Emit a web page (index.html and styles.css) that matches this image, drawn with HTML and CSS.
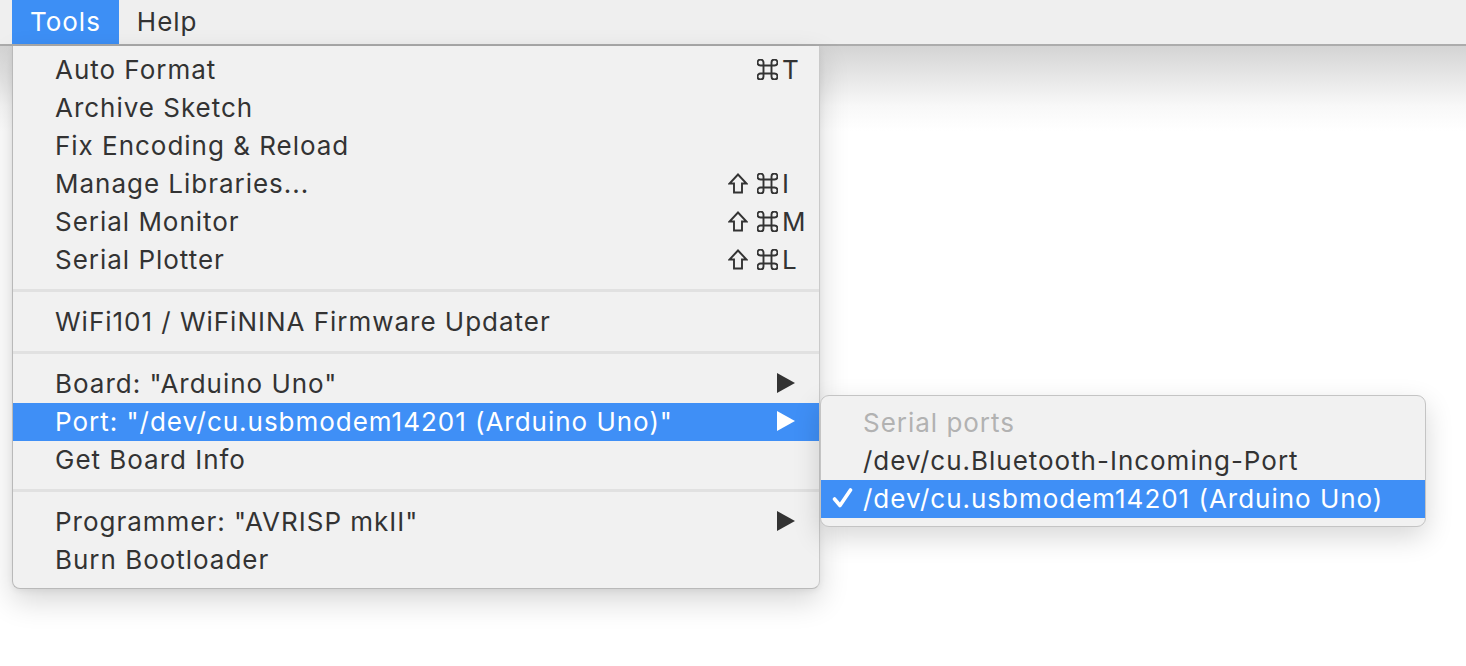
FILE: index.html
```html
<!DOCTYPE html>
<html>
<head>
<meta charset="utf-8">
<link rel="stylesheet" href="styles.css">
</head>
<body>
<div class="menubar">
  <div class="mb-item active">Tools</div>
  <div class="mb-item">Help</div>
</div>
<div class="desk"></div>

<div class="menu">
  <div class="item"><span class="label">Auto Format</span><span class="mods"><svg class="cmd" width="21" height="21" viewBox="-0.5 -0.5 21 21"><path d="M6 6 L6 3 A3 3 0 1 0 3 6 L17 6 A3 3 0 1 0 14 3 L14 17 A3 3 0 1 0 17 14 L3 14 A3 3 0 1 0 6 17 Z" fill="none" stroke="currentColor" stroke-width="1.9" stroke-linejoin="round"/></svg></span><span class="key">T</span></div>
  <div class="item"><span class="label">Archive Sketch</span><span class="mods"></span><span class="key"></span></div>
  <div class="item"><span class="label">Fix Encoding &amp; Reload</span><span class="mods"></span><span class="key"></span></div>
  <div class="item"><span class="label">Manage Libraries...</span><span class="mods"><svg class="shift" width="20" height="21" viewBox="0 0 20 21"><path d="M10 1.5 L18.5 10.5 L14 10.5 L14 19.5 L6 19.5 L6 10.5 L1.5 10.5 Z" fill="none" stroke="currentColor" stroke-width="1.9" stroke-linejoin="miter"/></svg><svg class="cmd" width="21" height="21" viewBox="-0.5 -0.5 21 21"><path d="M6 6 L6 3 A3 3 0 1 0 3 6 L17 6 A3 3 0 1 0 14 3 L14 17 A3 3 0 1 0 17 14 L3 14 A3 3 0 1 0 6 17 Z" fill="none" stroke="currentColor" stroke-width="1.9" stroke-linejoin="round"/></svg></span><span class="key">I</span></div>
  <div class="item"><span class="label">Serial Monitor</span><span class="mods"><svg class="shift" width="20" height="21" viewBox="0 0 20 21"><path d="M10 1.5 L18.5 10.5 L14 10.5 L14 19.5 L6 19.5 L6 10.5 L1.5 10.5 Z" fill="none" stroke="currentColor" stroke-width="1.9" stroke-linejoin="miter"/></svg><svg class="cmd" width="21" height="21" viewBox="-0.5 -0.5 21 21"><path d="M6 6 L6 3 A3 3 0 1 0 3 6 L17 6 A3 3 0 1 0 14 3 L14 17 A3 3 0 1 0 17 14 L3 14 A3 3 0 1 0 6 17 Z" fill="none" stroke="currentColor" stroke-width="1.9" stroke-linejoin="round"/></svg></span><span class="key">M</span></div>
  <div class="item"><span class="label">Serial Plotter</span><span class="mods"><svg class="shift" width="20" height="21" viewBox="0 0 20 21"><path d="M10 1.5 L18.5 10.5 L14 10.5 L14 19.5 L6 19.5 L6 10.5 L1.5 10.5 Z" fill="none" stroke="currentColor" stroke-width="1.9" stroke-linejoin="miter"/></svg><svg class="cmd" width="21" height="21" viewBox="-0.5 -0.5 21 21"><path d="M6 6 L6 3 A3 3 0 1 0 3 6 L17 6 A3 3 0 1 0 14 3 L14 17 A3 3 0 1 0 17 14 L3 14 A3 3 0 1 0 6 17 Z" fill="none" stroke="currentColor" stroke-width="1.9" stroke-linejoin="round"/></svg></span><span class="key">L</span></div>
  <div class="sep"></div>
  <div class="item"><span class="label">WiFi101 / WiFiNINA Firmware Updater</span><span class="mods"></span><span class="key"></span></div>
  <div class="sep"></div>
  <div class="item"><span class="label">Board: "Arduino Uno"</span><span class="mods"></span><span class="arrow"><svg width="18" height="20" viewBox="0 0 18 20"><path d="M0 0 L18 10 L0 20 Z" fill="currentColor"/></svg></span></div>
  <div class="item hl"><span class="label">Port: "/dev/cu.usbmodem14201 (Arduino Uno)"</span><span class="mods"></span><span class="arrow"><svg width="18" height="20" viewBox="0 0 18 20"><path d="M0 0 L18 10 L0 20 Z" fill="currentColor"/></svg></span></div>
  <div class="item"><span class="label">Get Board Info</span><span class="mods"></span><span class="key"></span></div>
  <div class="sep"></div>
  <div class="item"><span class="label">Programmer: "AVRISP mkII"</span><span class="mods"></span><span class="arrow"><svg width="18" height="20" viewBox="0 0 18 20"><path d="M0 0 L18 10 L0 20 Z" fill="currentColor"/></svg></span></div>
  <div class="item"><span class="label">Burn Bootloader</span><span class="mods"></span><span class="key"></span></div>
</div>

<div class="submenu">
  <div class="sitem header"><span class="check"></span><span>Serial ports</span></div>
  <div class="sitem"><span class="check"></span><span>/dev/cu.Bluetooth-Incoming-Port</span></div>
  <div class="sitem hl"><span class="check"><svg width="21" height="20" viewBox="0 0 21 20"><path d="M2.5 11 L8 17.5 L18.5 2" fill="none" stroke="currentColor" stroke-width="3.6" stroke-linecap="round" stroke-linejoin="round"/></svg></span><span>/dev/cu.usbmodem14201 (Arduino Uno)</span></div>
</div>
</body>
</html>
```
FILE: styles.css
```css
html, body {
  margin: 0;
  padding: 0;
  width: 1466px;
  height: 666px;
  overflow: hidden;
  background: #ffffff;
  font-family: "Inter", "Liberation Sans", sans-serif;
  font-size: 26px;
  letter-spacing: 0.98px;
  color: #333333;
}

.menubar {
  display: flex;
  height: 44px;
  padding-left: 12px;
  background: #efefef;
  border-bottom: 2px solid #acacac;
  box-sizing: content-box;
}

.mb-item {
  display: flex;
  align-items: center;
  padding: 0 18px 2px;
  height: 44px;
  box-sizing: border-box;
  color: #333333;
}

.mb-item.active {
  background: #3d8ff5;
  color: #ffffff;
}

.desk {
  height: 620px;
  background: linear-gradient(to bottom, #d4d4d4 0px, #e6e6e6 30px, #f8f8f8 60px, #ffffff 85px);
}

.menu {
  position: absolute;
  left: 12px;
  top: 46px;
  width: 808px;
  padding: 5px 0 9px;
  background: #f1f1f1;
  border-left: 1px solid #b9b9b9;
  border-right: 1px solid #cacaca;
  border-bottom: 1px solid #b9b9b9;
  border-radius: 0 0 8px 8px;
  box-sizing: border-box;
  box-shadow: 0 12px 30px rgba(0, 0, 0, 0.16), 0 2px 6px rgba(0, 0, 0, 0.06);
}

.item {
  display: grid;
  grid-template-columns: 1fr auto 37px;
  align-items: center;
  height: 38px;
  padding-left: 42px;
  padding-bottom: 2px;
  box-sizing: border-box;
  white-space: nowrap;
}

.item.hl {
  background: #3f8ff6;
  color: #ffffff;
}

.mods {
  display: flex;
  align-items: center;
  justify-content: flex-end;
  gap: 9px;
  padding-right: 4px;
  color: #333333;
}

.mods svg {
  display: block;
}

.key {
  padding-left: 0;
}

.arrow {
  display: flex;
  align-items: center;
  margin-left: -5px;
  color: #333333;
}

.item.hl .arrow {
  color: #ffffff;
}

.sep {
  height: 3px;
  margin: 10px 0 11px;
  background: #e1e1e1;
}

.submenu {
  position: absolute;
  left: 820px;
  top: 395px;
  width: 606px;
  padding: 8px 0;
  background: #f1f1f1;
  border: 1px solid #c4c4c4;
  border-radius: 9px;
  box-sizing: border-box;
  box-shadow: 0 10px 28px rgba(0, 0, 0, 0.16);
}

.sitem {
  display: flex;
  align-items: center;
  height: 38px;
  padding-bottom: 2px;
  box-sizing: border-box;
  white-space: nowrap;
}

.sitem.header {
  color: #b2b2b2;
}

.sitem.hl {
  background: #3f8ff6;
  color: #ffffff;
}

.check {
  width: 42px;
  display: flex;
  justify-content: flex-end;
  padding-right: 10px;
  box-sizing: border-box;
}
```
